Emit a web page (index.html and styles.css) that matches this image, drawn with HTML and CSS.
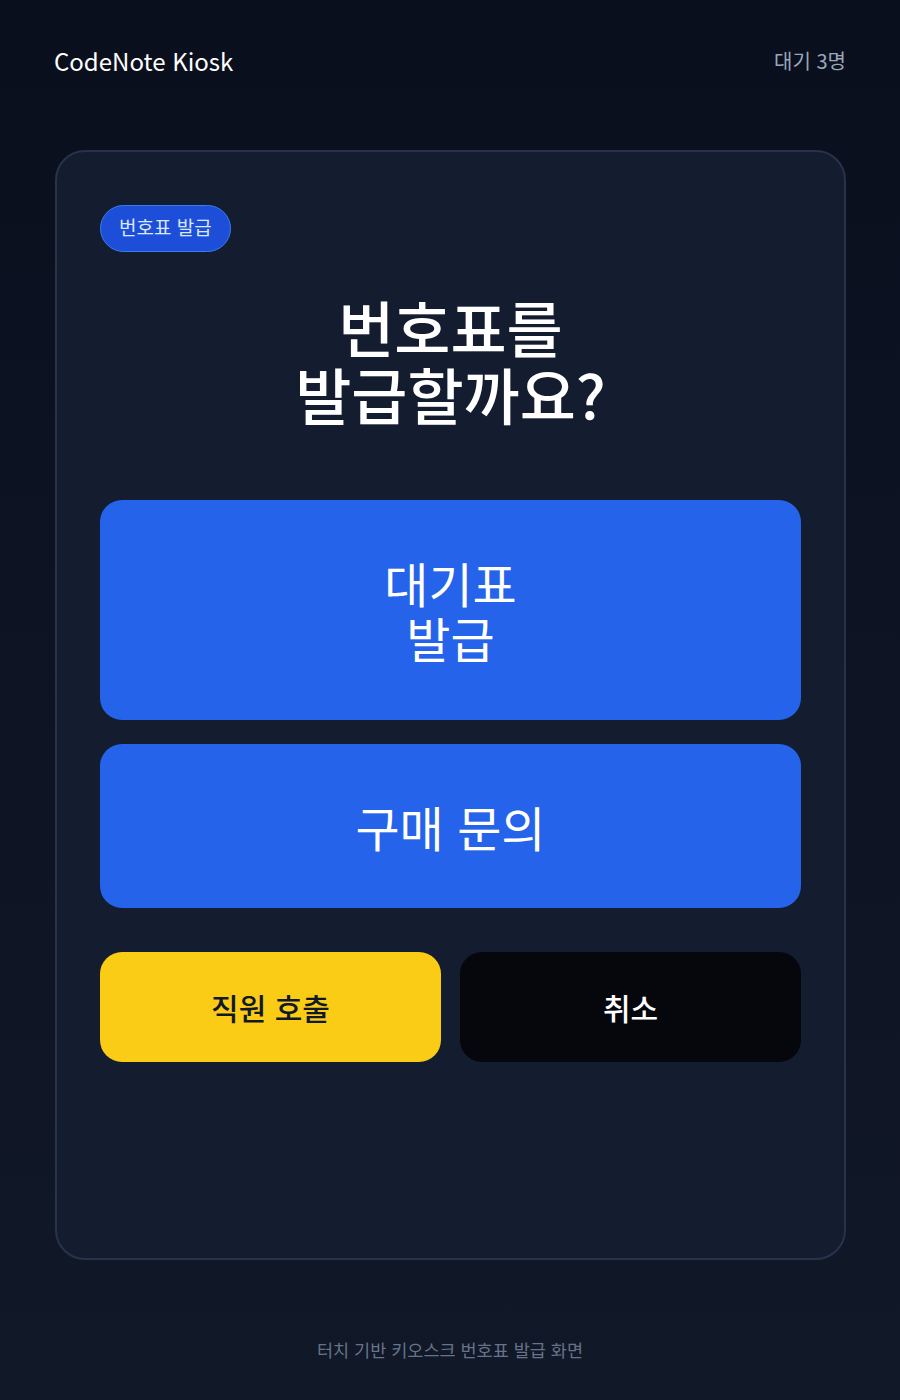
FILE: index.html
```html
<!DOCTYPE html>
<html lang="ko">
<head>
  <meta charset="UTF-8">
  <meta name="viewport" content="width=device-width, initial-scale=1.0">
  <title>CodeNote Kiosk</title>
  <link rel="stylesheet" href="styles.css">
</head>
<body>
  <!-- 상단 바 -->
  <header class="topbar">
    <h1 class="brand">CodeNote Kiosk</h1>
    <span class="queue">대기 3명</span>
  </header>

  <main class="card">
    <span class="badge">번호표 발급</span>
    <h2 class="title">번호표를<br>발급할까요?</h2>

    <button class="btn btn-primary btn-big">대기표<br>발급</button>
    <button class="btn btn-primary btn-mid">구매 문의</button>

    <div class="row">
      <button class="btn btn-staff">직원 호출</button>
      <button class="btn btn-cancel">취소</button>
    </div>
  </main>

  <footer>
    <p>터치 기반 키오스크 번호표 발급 화면</p>
  </footer>
</body>
</html>
```

FILE: styles.css
```css
body {
  margin: 0;
  padding: 0;
  min-height: 1400px;
  font-family: "Noto Sans CJK KR", "Noto Sans", sans-serif;
  background: linear-gradient(180deg, #0a0f1e 0%, #111827 100%);
  color: #ffffff;
}

/* Header */
.topbar {
  display: flex;
  justify-content: space-between;
  align-items: center;
  padding: 41px 54px 0;
  height: 39px;
}

.brand {
  margin: 0;
  font-size: 24px;
  font-weight: 400;
  color: #ffffff;
}

.queue {
  font-size: 20px;
  color: #9aa6ba;
}

/* Card */
.card {
  box-sizing: border-box;
  display: flex;
  flex-direction: column;
  margin: 70px 54px 0 55px;
  height: 1110px;
  padding: 53px 43px;
  background-color: #141c30;
  border: 2px solid #28334b;
  border-radius: 30px;
}

.badge {
  align-self: flex-start;
  box-sizing: border-box;
  height: 47px;
  padding: 0 18px 4px;
  display: flex;
  align-items: center;
  font-size: 19px;
  color: #dbe6ff;
  background-color: #1d4ed8;
  border: 1px solid #3b7cf0;
  border-radius: 24px;
}

.title {
  margin: 41px 0 73px;
  text-align: center;
  font-size: 61px;
  font-weight: 500;
  line-height: 67px;
}

.btn {
  font-family: inherit;
  border: none;
  cursor: pointer;
  border-radius: 22px;
  color: #ffffff;
}

.btn-primary {
  background-color: #2563eb;
  font-size: 48px;
  font-weight: 400;
  line-height: 55px;
}

.btn-big {
  height: 220px;
}

.btn-mid {
  height: 164px;
  margin-top: 24px;
}

.row {
  display: flex;
  gap: 19px;
  margin-top: 44px;
}

.row .btn {
  flex: 1;
  height: 110px;
  font-size: 30px;
  font-weight: 500;
}

.btn-staff {
  background-color: #facc15;
  color: #111827;
}

.btn-cancel {
  background-color: #05070c;
}

/* Footer */
footer {
  text-align: center;
  padding-top: 77px;
}

footer p {
  margin: 0;
  font-size: 17.5px;
  color: #66738a;
}
```
